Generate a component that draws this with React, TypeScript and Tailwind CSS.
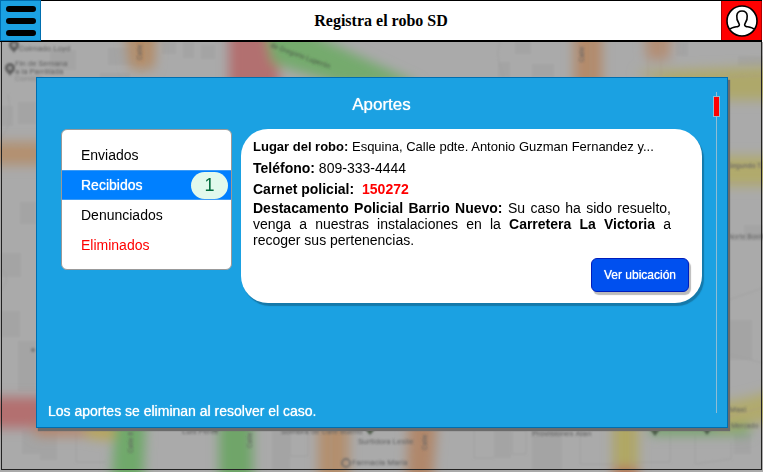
import type { ReactNode } from "react";

type MenuItem = { label: string; count?: number; danger?: boolean };

const items: MenuItem[] = [
  { label: "Enviados" },
  { label: "Recibidos", count: 1 },
  { label: "Denunciados" },
  { label: "Eliminados", danger: true },
];

const blocks = [
  [50, 50, 26, 20], [108, 48, 32, 17], [162, 42, 14, 12], [183, 42, 11, 16], [201, 45, 14, 14],
  [1, 106, 12, 20], [18, 102, 18, 22], [100, 73, 30, 5], [20, 202, 16, 22], [1, 253, 20, 24],
  [1, 311, 19, 26], [18, 341, 18, 50], [22, 430, 20, 24], [40, 432, 17, 28], [272, 430, 18, 40],
  [494, 430, 17, 28], [532, 430, 30, 40], [734, 434, 17, 20], [744, 225, 19, 15], [728, 320, 24, 40],
  [515, 42, 16, 12], [532, 64, 22, 13], [676, 42, 12, 14], [738, 56, 25, 10], [498, 62, 12, 15],
];

const lots = "M512 430h14v24h-14zM474 430v28h20M580 430v34h34V430M632 462h38v-32M695 434v30l36-5v-17M290 432h18v24h-18zM1 138c10-12 10-22 7-44M76 432v30h30M728 300l35-12M728 240h35M500 42c-4 10-2 20 4 35M731 355l32 8M1 290c6-6 8-14 2-20";

function Pin({ x, y }: { x: number; y: number }) {
  return (
    <g transform={`translate(${x} ${y})`}>
      <path d="M0 7C-1 4-5 3-5-1a5 5 0 0 1 10 0C5 3 1 4 0 7Z" fill="#606060" />
      <circle cy="-1" r="2" fill="#9a9a9a" />
    </g>
  );
}

function CityMap() {
  return (
    <svg aria-hidden="true" className="absolute inset-0 h-full w-full" viewBox="0 42 763 430" preserveAspectRatio="xMidYMid slice">
      <defs>
        <filter id="heat" filterUnits="userSpaceOnUse" x="-40" y="0" width="850" height="520"><feGaussianBlur stdDeviation="6" /></filter>
        <filter id="soft" filterUnits="userSpaceOnUse" x="-40" y="0" width="850" height="520"><feGaussianBlur stdDeviation="0.8" /></filter>
      </defs>
      <rect y="42" width="763" height="430" fill="#aaaaaa" />
      <g filter="url(#soft)">
        {blocks.map(([x, y, w, h], i) => (
          <rect key={i} x={x} y={y} width={w} height={h} fill="#a4a4a4" />
        ))}
        <path d={lots} fill="none" stroke="#a0a0a0" />
      </g>
      <g filter="url(#heat)">
        <path d="M124 20h33l-3 49h-24z" fill="#b48c68" />
        <path d="M229 20h50v80h-50z" fill="#b27070" />
        <path d="M262 20l40 10 120 55h-80l-70-22z" fill="#74aa6d" />
        <path d="M574 20h28v80h-28z" fill="#b38a6b" />
        <path d="M644 20h28l-3 40h-22z" fill="#b48e74" />
        <path d="M635 72l150-6v34h-80z" fill="#aea86b" />
        <path d="M710 156h80v30h-80z" fill="#b1aa6c" />
        <path d="M-20 142h80v23H-20z" fill="#b39070" />
        <path d="M-20 397h80v31H-20z" fill="#b36f6f" />
        <path d="M35 424h55v12H35z" fill="#b5866c" />
        <path d="M83 424h40l-12 16-22-2z" fill="#b8a458" />
        <path d="M116 410h30l-3 80h-32z" fill="#70a96a" />
        <path d="M219 410h34v80h-34z" fill="#6fa569" />
        <path d="M318 410h31v80h-31z" fill="#b38f6e" />
        <path d="M409 410h29l-6 80h-26z" fill="#b0876a" />
        <path d="M613 410h25v80h-25z" fill="#b0a764" />
        <path d="M613 468h25v20h-25z" fill="#b36c60" />
        <path d="M650 422h100v13h-100z" fill="#74a46a" />
        <path d="M710 403c20 0 40-6 75-16v32l-65 10z" fill="#b1aa6d" />
      </g>
      <g stroke="#a99a87" strokeOpacity=".55" fill="none" filter="url(#soft)">
        <path d="M134 42l1 25q6 10 12 0l-1-25M577 42v35M591 42v35M648 42v35M661 42v35M0 146l36 1M0 162h36M650 88c40-2 50-12 113-12M728 166h35M728 183h35M331 430v40M344 430v40M617 430v40M631 430v40M728 417l35-10" />
      </g>
      <g filter="url(#soft)" className="font-['Roboto','Liberation_Sans',sans-serif] text-[8px]" fill="#626262">
        <text x="19" y="51">Colmado Loyd</text>
        <text x="15" y="66">Fin de Semana</text>
        <text x="15" y="74">a la Parrillada</text>
        <text x="15" y="81" fill="#888">Comida</text>
        <g className="text-[7px]">
          <text transform="translate(270 47) rotate(20)" fill="#4c5c4a">de Gregorio Luperón</text>
          <text transform="translate(142 60) rotate(-90)">Calle</text>
          <text transform="translate(584 62) rotate(-90)">Calle</text>
          <text transform="translate(133 453) rotate(-90)">Calle 8</text>
          <text transform="translate(252 448) rotate(-90)">Calle</text>
          <text transform="translate(427 450) rotate(-90)">Calle</text>
          <text x="728" y="168">Segundo T.</text>
          <text x="728" y="239">Norte Bonita</text>
          <text x="731" y="428">Mercado</text>
        </g>
        <text x="182" y="434">Luis Pérez</text>
        <text x="281" y="434">Sombra de Café Bueno</text>
        <text x="358" y="444">Surtidora Leslie</text>
        <text x="352" y="465">Farmacia Maria</text>
        <text x="532" y="436">Provisiones Alan</text>
        <text x="729" y="412">Maxi</text>
        <path d="M649 428h12l-6 8zM702 428h10l-5 7zM365 429h10l-5 6zM211 428h8l-4 4z" fill="#4d5b4a" />
        <circle cx="346" cy="463" r="4" fill="none" stroke="#666" strokeWidth="1.5" />
        <circle cx="33" cy="350" r="2" fill="#777" />
        <Pin x={14} y={46} />
        <Pin x={10} y={69} />
      </g>
    </svg>
  );
}

function Line({ label, className, children }: { label: string; className: string; children: ReactNode }) {
  return (
    <p className={className}>
      <strong>{label}</strong> {children}
    </p>
  );
}

export default function App() {
  return (
    <div className="flex min-h-screen flex-col bg-white font-['Liberation_Sans',Arial,sans-serif] text-sm leading-4 text-black">
      <header className="relative mr-px flex h-[42px] items-stretch justify-between border-t border-b-2 border-black bg-white">
        <button type="button" aria-label="Menú" className="-my-px grid w-[41px] place-items-center border border-[#006eaf] bg-[#1ba1e2]">
          <svg aria-hidden="true" width="32" height="32" viewBox="0 0 32 32" stroke="#000" strokeWidth="6" strokeLinecap="round">
            <path d="M4 4h24M4 16h24M4 28h24" />
          </svg>
        </button>
        <h1 className="self-center font-['Liberation_Serif','Times_New_Roman',serif] text-base font-bold">Registra el robo SD</h1>
        <button type="button" aria-label="Perfil" className="grid w-[41px] place-items-center border-x border-[#b20000] bg-[#ff0000]">
          <svg aria-hidden="true" width="32" height="32" viewBox="0 0 32 32" fill="#fff" stroke="#000" strokeWidth="1.6">
            <circle cx="16" cy="16" r="15" />
            <path d="M3.500 24.500C5.500 22.500 8.500 22.200 11.500 21.600c2-.5 2.300-2 1.300-3.400C11.300 16 10.500 13.500 10.800 10.800 11.100 7.600 13.200 6 16 6s4.900 1.600 5.200 4.800c.3 2.700-.5 5.200-2 7.400-1 1.400-.7 2.900 1.300 3.400 3 .6 6 .9 8 2.900" />
          </svg>
        </button>
      </header>

      <main className="relative flex flex-1 flex-col">
        <CityMap />
        <div aria-hidden="true" className="absolute top-0 right-px bottom-0.5 left-px border-x border-b border-[#222]" />
        <section className="relative mx-[35px] mt-[35px] mb-11 ml-9 flex flex-1 border border-[#006eaf] bg-[#1ba1e2] shadow-[2px_3px_1px_#6b6b6b]">
          <div className="flex min-w-0 flex-1 flex-col pr-[11px]">
            <h2 className="mt-[17px] mb-3.5 pl-6 text-center text-[17px] leading-5 text-white text-shadow-[0_0_1px_#fff]">Aportes</h2>
            <div className="flex items-start gap-[9px] pl-6">
              <nav aria-label="Aportes" className="w-[171px] shrink-0 rounded-md border border-[#999] bg-white pt-[10px] pb-[9px]">
                <ul>
                  {items.map((item) => (
                    <li key={item.label}>
                      <button
                        type="button"
                        className={`flex h-[30px] w-full items-center justify-between pr-[3px] pl-[19px] ${
                          item.count
                            ? "border-y border-[#3d9bf5] bg-[#0080ff] text-white text-shadow-[0_0_1px_#fff]"
                            : item.danger
                              ? "text-[#ff0000]"
                              : ""
                        }`}
                      >
                        <span>{item.label}</span>
                        {item.count && (
                          <span className="grid h-[27px] w-[37px] place-items-center rounded-full bg-[#e1f9ec] text-lg leading-5 text-[#006b3c] text-shadow-none">
                            {item.count}
                          </span>
                        )}
                      </button>
                    </li>
                  ))}
                </ul>
              </nav>
              <article className="flex min-w-0 flex-1 flex-col rounded-[27px] bg-white pt-[7px] pr-[13px] pb-[11px] pl-3 shadow-[2px_3px_1px_#1579aa]">
                <Line label="Lugar del robo:" className="text-[13px] leading-[22px]">
                  Esquina, Calle pdte. Antonio Guzman Fernandez y...
                </Line>
                <Line label="Teléfono:" className="leading-5">809-333-4444</Line>
                <Line label="Carnet policial:" className="leading-[22px]">
                  <strong className="ml-1 text-[#ff0000]">150272</strong>
                </Line>
                <div className="mr-[18px]">
                  <Line label="Destacamento Policial Barrio Nuevo:" className="text-justify">
                    Su caso ha sido resuelto, venga a nuestras instalaciones en la <strong>Carretera La Victoria</strong> a recoger sus pertenencias.
                  </Line>
                </div>
                <button
                  type="button"
                  className="mt-[10px] h-[34px] self-end rounded-md border border-[#001dbc] bg-[#0050ef] px-3 text-xs text-white shadow-[2px_3px_1px_#bbb] text-shadow-[0_0_1px_#fff]"
                >
                  Ver ubicación
                </button>
              </article>
            </div>
            <p className="mt-auto pt-4 pb-2 pl-[11px] text-white text-shadow-[0_0_1px_#fff]">Los aportes se eliminan al resolver el caso.</p>
          </div>
          <div aria-hidden="true" className="my-3.5 mr-[7px] flex w-[7px] flex-col items-center">
            <span className="h-1 w-px bg-[#8fbdd5]" />
            <span className="h-[21px] w-[7px] border border-[#8fbdd5] bg-[#ff0000]" />
            <span className="w-px flex-1 bg-[#8fbdd5]" />
          </div>
        </section>
      </main>
    </div>
  );
}
